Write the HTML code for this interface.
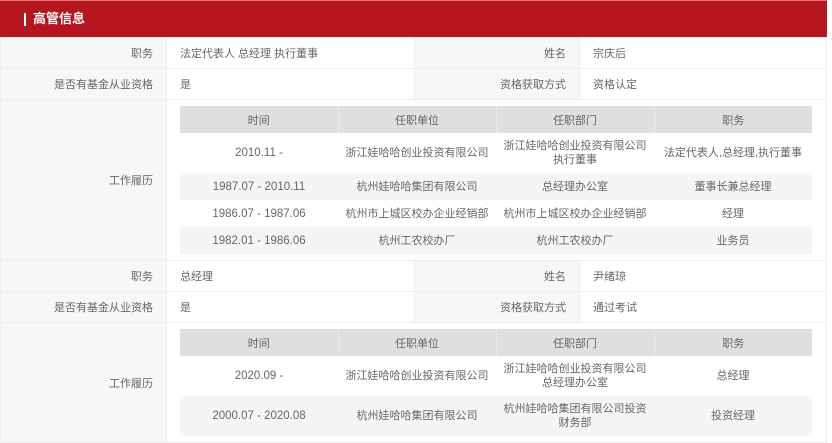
<!DOCTYPE html>
<html><head><meta charset="utf-8"><style>
*{margin:0;padding:0;box-sizing:border-box}
body{width:832px;height:422px;overflow:hidden;background:#fff;font-family:"Liberation Sans","Noto Sans CJK SC",sans-serif;font-size:11px;color:#666}
.wrap{position:absolute;left:0;top:0;width:827px}
.hd{height:37px;background:#b5161f;border-top:1px solid #e77;color:#fff;font-weight:bold;font-size:13px;line-height:36px;padding-left:24px;position:relative}
.hd:before{content:"";position:absolute;left:24px;top:12px;width:2px;height:13px;background:#fff}
.hd span{margin-left:9px}
table.o{width:827px;border-collapse:collapse;table-layout:fixed}
table.o td{border:1px solid #eee;height:31px;padding:0 13px}
td.l{background:#f7f7f7;text-align:right}
.in{width:632px;border-collapse:collapse;table-layout:fixed;margin:6px 0}
.in th{background:#dfdfdf;font-weight:normal;height:27px;border-left:1px solid #ebebeb;text-align:center}
.in th:first-child{border-left:none}
.in td{border:none!important;height:27px!important;text-align:center;padding:0 4px!important;line-height:14px}
.in tr.g td{background:#f5f5f5}
.in tr.t td{height:40px!important}
td.w{padding:0 13px!important}
.d{font-size:11.5px}
</style></head><body><div class="wrap">
<div class="hd"><span>高管信息</span></div>
<table class="o">
<col style="width:166px"><col style="width:248px"><col style="width:165px"><col>
<tr><td class="l">职务</td><td>法定代表人 总经理 执行董事</td><td class="l">姓名</td><td>宗庆后</td></tr>
<tr><td class="l">是否有基金从业资格</td><td>是</td><td class="l">资格获取方式</td><td>资格认定</td></tr>
<tr><td class="l" style="height:161px">工作履历</td><td colspan="3" class="w">
<table class="in"><tr><th>时间</th><th>任职单位</th><th>任职部门</th><th>职务</th></tr>
<tr class="t"><td class="d">2010.11 -</td><td>浙江娃哈哈创业投资有限公司</td><td>浙江娃哈哈创业投资有限公司执行董事</td><td>法定代表人,总经理,执行董事</td></tr>
<tr class="g"><td class="d">1987.07 - 2010.11</td><td>杭州娃哈哈集团有限公司</td><td>总经理办公室</td><td>董事长兼总经理</td></tr>
<tr><td class="d">1986.07 - 1987.06</td><td>杭州市上城区校办企业经销部</td><td>杭州市上城区校办企业经销部</td><td>经理</td></tr>
<tr class="g"><td class="d">1982.01 - 1986.06</td><td>杭州工农校办厂</td><td>杭州工农校办厂</td><td>业务员</td></tr>
</table></td></tr>
<tr><td class="l">职务</td><td>总经理</td><td class="l">姓名</td><td>尹绪琼</td></tr>
<tr><td class="l">是否有基金从业资格</td><td>是</td><td class="l">资格获取方式</td><td>通过考试</td></tr>
<tr><td class="l" style="height:120px">工作履历</td><td colspan="3" class="w" style="vertical-align:top">
<table class="in"><tr><th>时间</th><th>任职单位</th><th>任职部门</th><th>职务</th></tr>
<tr class="t"><td class="d">2020.09 -</td><td>浙江娃哈哈创业投资有限公司</td><td>浙江娃哈哈创业投资有限公司总经理办公室</td><td>总经理</td></tr>
<tr class="g t"><td class="d">2000.07 - 2020.08</td><td>杭州娃哈哈集团有限公司</td><td>杭州娃哈哈集团有限公司投资财务部</td><td>投资经理</td></tr>
</table></td></tr>
</table></div></body></html>
